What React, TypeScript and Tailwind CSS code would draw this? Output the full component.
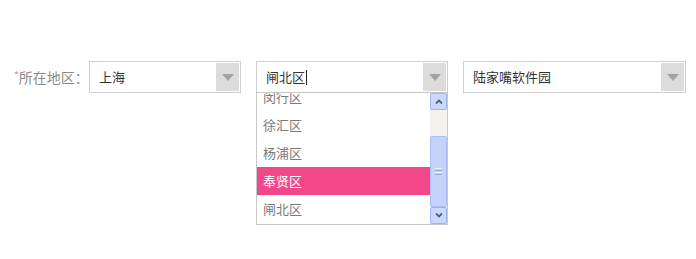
import React from "react";

const font = { fontFamily: '"Noto Sans CJK SC", "Noto Sans", sans-serif' };

function Arrow() {
  return (
    <div className="absolute right-[1px] top-[1px] bottom-[1px] w-[23px] bg-[#dcdcdc] flex items-center justify-center">
      <svg width="12" height="7" viewBox="0 0 12 7">
        <polygon points="0,0 12,0 6,7" fill="#a3a3a3" />
      </svg>
    </div>
  );
}

function SelectBox({
  width,
  value,
  caret,
  children,
}: {
  width: string;
  value: string;
  caret?: boolean;
  children?: React.ReactNode;
}) {
  return (
    <div className={`relative h-[32px] border border-[#cfcfcf] bg-white ${width}`}>
      <div className="flex h-full items-center pl-[9px] text-[13px] text-[#333]">
        {value}
        {caret && <span className="ml-[1px] inline-block h-[15px] w-[1px] bg-[#222]" />}
      </div>
      <Arrow />
      {children}
    </div>
  );
}

export default function App() {
  const items = ["闵行区", "徐汇区", "杨浦区", "奉贤区", "闸北区"];
  const active = "奉贤区";

  return (
    <div className="h-[259px] w-[696px] bg-white" style={font}>
      <div className="flex items-center pl-[14px] pt-[61px]">
        <div className="w-[75px] whitespace-nowrap text-[14px] text-[#8a8a8a] leading-none">
          <span className="text-[#f06fa6] text-[10px] align-top">*</span>所在地区：
        </div>
        <SelectBox width="w-[152px]" value="上海" />
        <div className="ml-[15px]">
          <SelectBox width="w-[192px]" value="闸北区" caret>
            {/* dropdown list */}
            <div className="absolute left-[-1px] top-[30px] z-10 flex h-[133px] w-[192px] border border-[#c8c8c8] bg-white">
              <div className="flex-1 overflow-hidden">
                <div className="mt-[-10px]">
                  {items.map((it) => (
                    <div
                      key={it}
                      className={`flex h-[28px] items-center pl-[6px] text-[13px] ${
                        it === active ? "bg-[#f2488a] text-white" : "text-[#7a7a7a]"
                      }`}
                    >
                      {it}
                    </div>
                  ))}
                </div>
              </div>
              {/* scrollbar */}
              <div className="flex w-[17px] flex-col bg-[#f3f2ec]">
                <div className="flex h-[17px] items-center justify-center rounded-[2px] border border-[#9db4ef] bg-[#c9d8fc]">
                  <svg width="8" height="5" viewBox="0 0 8 5">
                    <polyline points="1,4.5 4,1.5 7,4.5" fill="none" stroke="#4d6185" strokeWidth="1.8" />
                  </svg>
                </div>
                <div className="h-[26px]" />
                <div className="flex flex-1 items-center justify-center rounded-[2px] border border-[#a9bdf3] bg-[#c4d3fb]">
                  <div className="flex flex-col gap-[1px]">
                    <div className="h-[1px] w-[7px] bg-[#eef3ff]" />
                    <div className="h-[1px] w-[7px] bg-[#8ea6e6]" />
                    <div className="h-[1px] w-[7px] bg-[#eef3ff]" />
                    <div className="h-[1px] w-[7px] bg-[#8ea6e6]" />
                  </div>
                </div>
                <div className="flex h-[17px] items-center justify-center rounded-[2px] border border-[#9db4ef] bg-[#c9d8fc]">
                  <svg width="8" height="5" viewBox="0 0 8 5">
                    <polyline points="1,0.5 4,3.5 7,0.5" fill="none" stroke="#4d6185" strokeWidth="1.8" />
                  </svg>
                </div>
              </div>
            </div>
          </SelectBox>
        </div>
        <div className="ml-[15px]">
          <SelectBox width="w-[223px]" value="陆家嘴软件园" />
        </div>
      </div>
    </div>
  );
}
